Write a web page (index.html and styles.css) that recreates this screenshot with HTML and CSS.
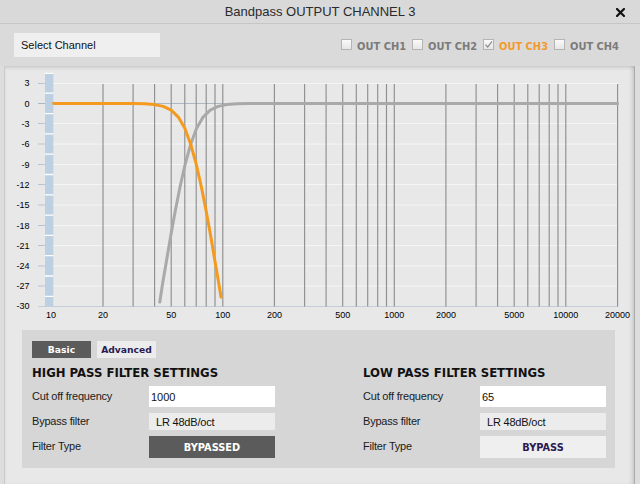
FILE: index.html
```html
<!DOCTYPE html>
<html lang="en">
<head>
<meta charset="utf-8">
<title>Bandpass OUTPUT CHANNEL 3</title>
<link rel="stylesheet" href="styles.css">
</head>
<body>
<div class="window">
  <header class="titlebar">
    <h1 class="title">Bandpass OUTPUT CHANNEL 3</h1>
    <button class="close" aria-label="Close">
      <svg width="9" height="9" viewBox="0 0 9 9"><path d="M1 1L8 8M8 1L1 8" stroke="#111" stroke-width="2.2" stroke-linecap="square" fill="none"/></svg>
    </button>
  </header>

  <div class="toolbar">
    <div class="select">Select Channel</div>
    <div class="channels">
      <label class="ch"><span class="cb"></span>OUT CH1</label>
      <label class="ch"><span class="cb"></span>OUT CH2</label>
      <label class="ch on"><span class="cb"><svg width="9" height="9" viewBox="0 0 9 9"><path d="M1.5 4.6L3.7 7L8 1.3" stroke="#8a8a8a" stroke-width="1.2" fill="none"/></svg></span>OUT CH3</label>
      <label class="ch"><span class="cb"></span>OUT CH4</label>
    </div>
  </div>

  <main class="content">
    <div class="chart">
      <svg class="plot" width="629" height="264" viewBox="5 66 629 264">
        <!-- horizontal grid -->
        <g stroke="#f5f5f5" stroke-width="1">
          <path d="M53 83.5H618M53 123.5H618M53 144H618M53 164.5H618M53 184.5H618M53 205H618M53 225.5H618M53 245.5H618M53 266H618M53 286H618"/>
        </g>
        <path d="M38 103.5H618" stroke="#aab7c5" stroke-width="1"/>
        <path d="M38 306.5H618" stroke="#c3ceda" stroke-width="1"/>
        <!-- y ticks -->
        <g stroke="#b7c3cf" stroke-width="1">
          <path d="M38 83.5H45M38 123.5H45M38 144H45M38 164.5H45M38 184.5H45M38 205H45M38 225.5H45M38 245.5H45M38 266H45M38 286H45"/>
        </g>
        <!-- vertical grid -->
        <g stroke="#8f8f8f" stroke-width="1.15">
          <path d="M103 84V306.5M133.1 84V306.5M154.6 84V306.5M171.2 84V306.5M184.8 84V306.5M196.2 84V306.5M206.2 84V306.5M215 84V306.5M222.8 84V306.5M274.4 84V306.5M304.6 84V306.5M326.1 84V306.5M342.7 84V306.5M356.3 84V306.5M367.7 84V306.5M377.7 84V306.5M386.5 84V306.5M394.3 84V306.5M445.9 84V306.5M476.1 84V306.5M497.6 84V306.5M514.2 84V306.5M527.8 84V306.5M539.2 84V306.5M549.2 84V306.5M558 84V306.5M565.8 84V306.5M617.6 84V306.5"/>
        </g>
        <!-- level bar -->
        <rect x="45" y="72.9" width="8.3" height="233.6" fill="#bdd0e2"/>
        <g stroke="#fff" stroke-width="1.3">
          <path d="M45 73.4H53.3M45 93.2H53.3M45 113.6H53.3M45 133.9H53.3M45 154.2H53.3M45 174.5H53.3M45 194.8H53.3M45 215.1H53.3M45 235.4H53.3M45 255.7H53.3M45 276H53.3M45 296.3H53.3"/>
        </g>
        <!-- curves -->
        <g transform="translate(0.6 0)" fill="none" stroke-width="3" stroke-linejoin="round" stroke-linecap="round">
          <polyline stroke="#a9a9a9" points="159.2,302 161.8,284.7 165.9,260.7 170.1,236.1 174.6,211.3 179.4,187 184.6,164.1 190.1,144.2 196,128.3 202.5,117.1 209.6,110.2 217.5,106.4 226.3,104.6 236.2,103.8 247.7,103.5 258,103.4 617,103.4"/>
          <polyline stroke="#f49b1f" points="53,103.4 132.5,103.5 144,103.8 153.9,104.6 162.7,106.4 170.6,110.2 177.7,117.1 184.2,128.3 190.1,144.2 195.6,164.1 200.8,187 205.6,211.3 210.1,236.1 214.3,260.7 218.4,284.7 220.4,297"/>
        </g>
        <!-- y labels -->
        <g class="axis" text-anchor="end">
          <text x="29.5" y="86.4">3</text>
          <text x="29.5" y="106.7">0</text>
          <text x="29.5" y="127">-3</text>
          <text x="29.5" y="147.3">-6</text>
          <text x="29.5" y="167.6">-9</text>
          <text x="29.5" y="187.9">-12</text>
          <text x="29.5" y="208.2">-15</text>
          <text x="29.5" y="228.5">-18</text>
          <text x="29.5" y="248.8">-21</text>
          <text x="29.5" y="269.1">-24</text>
          <text x="29.5" y="289.4">-27</text>
          <text x="29.5" y="309.4">-30</text>
        </g>
        <!-- x labels -->
        <g class="axis" text-anchor="middle">
          <text x="51" y="318">10</text>
          <text x="103" y="318">20</text>
          <text x="171.2" y="318">50</text>
          <text x="222.8" y="318">100</text>
          <text x="274.4" y="318">200</text>
          <text x="342.7" y="318">500</text>
          <text x="394.3" y="318">1000</text>
          <text x="445.9" y="318">2000</text>
          <text x="514.2" y="318">5000</text>
          <text x="565.8" y="318">10000</text>
          <text x="617.4" y="318">20000</text>
        </g>
      </svg>
    </div>

    <section class="settings">
      <div class="tabs">
        <span class="tab active">Basic</span>
        <span class="tab">Advanced</span>
      </div>
      <div class="cols">
        <div class="filter">
          <h2>HIGH PASS FILTER SETTINGS</h2>
          <div class="row"><span class="lbl">Cut off frequency</span><div class="input">1000</div></div>
          <div class="row"><span class="lbl">Bypass filter</span><div class="sel">LR 48dB/oct</div></div>
          <div class="row"><span class="lbl">Filter Type</span><div class="btn dark">BYPASSED</div></div>
        </div>
        <div class="filter">
          <h2>LOW PASS FILTER SETTINGS</h2>
          <div class="row"><span class="lbl">Cut off frequency</span><div class="input">65</div></div>
          <div class="row"><span class="lbl">Bypass filter</span><div class="sel">LR 48dB/oct</div></div>
          <div class="row"><span class="lbl">Filter Type</span><div class="btn light">BYPASS</div></div>
        </div>
      </div>
    </section>
  </main>
</div>
</body>
</html>
```

FILE: styles.css
```css
* { box-sizing: border-box; margin: 0; padding: 0; }

html, body { width: 640px; height: 484px; overflow: hidden; }

body {
  background: #dcdcdc;
  font-family: "Liberation Sans", Arial, sans-serif;
  color: #111;
}

.window {
  width: 640px;
  height: 484px;
  display: flex;
  flex-direction: column;
  background: #dddddd;
}

/* title bar */
.titlebar {
  height: 24px;
  flex: none;
  display: grid;
  grid-template-columns: 1fr auto 1fr;
  align-items: center;
  background: #d9d9d9;
  border-bottom: 1px solid #c6c6c6;
}

.title {
  grid-column: 2;
  font-size: 13px;
  font-weight: normal;
  line-height: 23px;
  color: #2b2b2b;
}

.close {
  grid-column: 3;
  justify-self: end;
  margin-right: 15px;
  margin-top: 1px;
  width: 9px;
  height: 9px;
  border: 0;
  background: none;
  display: flex;
}

/* toolbar */
.toolbar {
  height: 42px;
  flex: none;
  display: flex;
  align-items: center;
  padding: 0 21px 0 14px;
  background: #dadada;
}

.select {
  width: 146px;
  height: 24px;
  line-height: 24px;
  padding-left: 7px;
  background: #efefef;
  font-size: 11px;
  color: #111;
}

.channels {
  margin-left: auto;
  display: flex;
  align-items: center;
  gap: 6px;
}

.ch {
  display: flex;
  align-items: center;
  gap: 5px;
  font-family: "DejaVu Sans", Verdana, sans-serif;
  font-weight: bold;
  font-size: 9.9px;
  color: #7b7b7b;
  padding-top: 2px;
}

.ch.on { color: #f39a2b; }

.cb {
  width: 11px;
  height: 11px;
  margin-top: -3px;
  border: 1px solid #b4b4b4;
  background: linear-gradient(#fafafa, #e6e6e6);
  display: flex;
  align-items: center;
  justify-content: center;
}

/* content */
.content {
  flex: 1;
  margin: 0 5px 0 4px;
  background: #e8e8e8;
  border-left: 1px solid #cbcbcb;
  border-right: 1px solid #ababab;
  box-shadow: inset 0 3px 4px -2px rgba(0, 0, 0, 0.16),
              inset -4px 0 4px -2px rgba(0, 0, 0, 0.12);
  display: flex;
  flex-direction: column;
}

.chart { height: 264px; flex: none; }

.plot { display: block; }

.axis {
  font-family: "Liberation Sans", Arial, sans-serif;
  font-size: 9px;
  fill: #000;
}

/* settings */
.settings {
  margin: 0 19px 0 17px;
  padding: 11px 10px 10px;
  background: #d6d6d6;
}

.tabs { display: flex; gap: 6px; }

.tab {
  width: 59px;
  height: 17px;
  display: flex;
  align-items: center;
  justify-content: center;
  font-family: "DejaVu Sans", Verdana, sans-serif;
  font-weight: bold;
  font-size: 9.2px;
  background: #ececec;
  color: #2b1a52;
}

.tab.active { background: #5b5b5b; color: #fff; }

.cols {
  display: grid;
  grid-template-columns: 331px 1fr;
  margin-top: 8px;
}

.filter {
  display: grid;
  grid-template-columns: 117px 126px;
  row-gap: 6px;
}

.filter h2 {
  grid-column: 1 / -1;
  font-family: "DejaVu Sans", Verdana, sans-serif;
  font-weight: bold;
  font-size: 11.7px;
  line-height: 14px;
  color: #111;
}

.row { display: contents; }

.lbl {
  align-self: center;
  font-size: 11px;
  letter-spacing: -0.2px;
  color: #1a1a1a;
  padding-bottom: 2px;
}

.input {
  height: 21px;
  line-height: 23px;
  padding-left: 2px;
  background: #fff;
  font-size: 11px;
}

.sel {
  height: 17px;
  line-height: 18px;
  padding-left: 7px;
  background: #ececec;
  font-size: 11px;
  letter-spacing: -0.2px;
}

.btn {
  height: 22px;
  display: flex;
  align-items: center;
  justify-content: center;
  font-family: "DejaVu Sans", Verdana, sans-serif;
  font-weight: bold;
  font-size: 9.8px;
}

.btn.dark { background: #5b5b5b; color: #fff; }
.btn.light { background: #efefef; color: #2b1a52; }
```
